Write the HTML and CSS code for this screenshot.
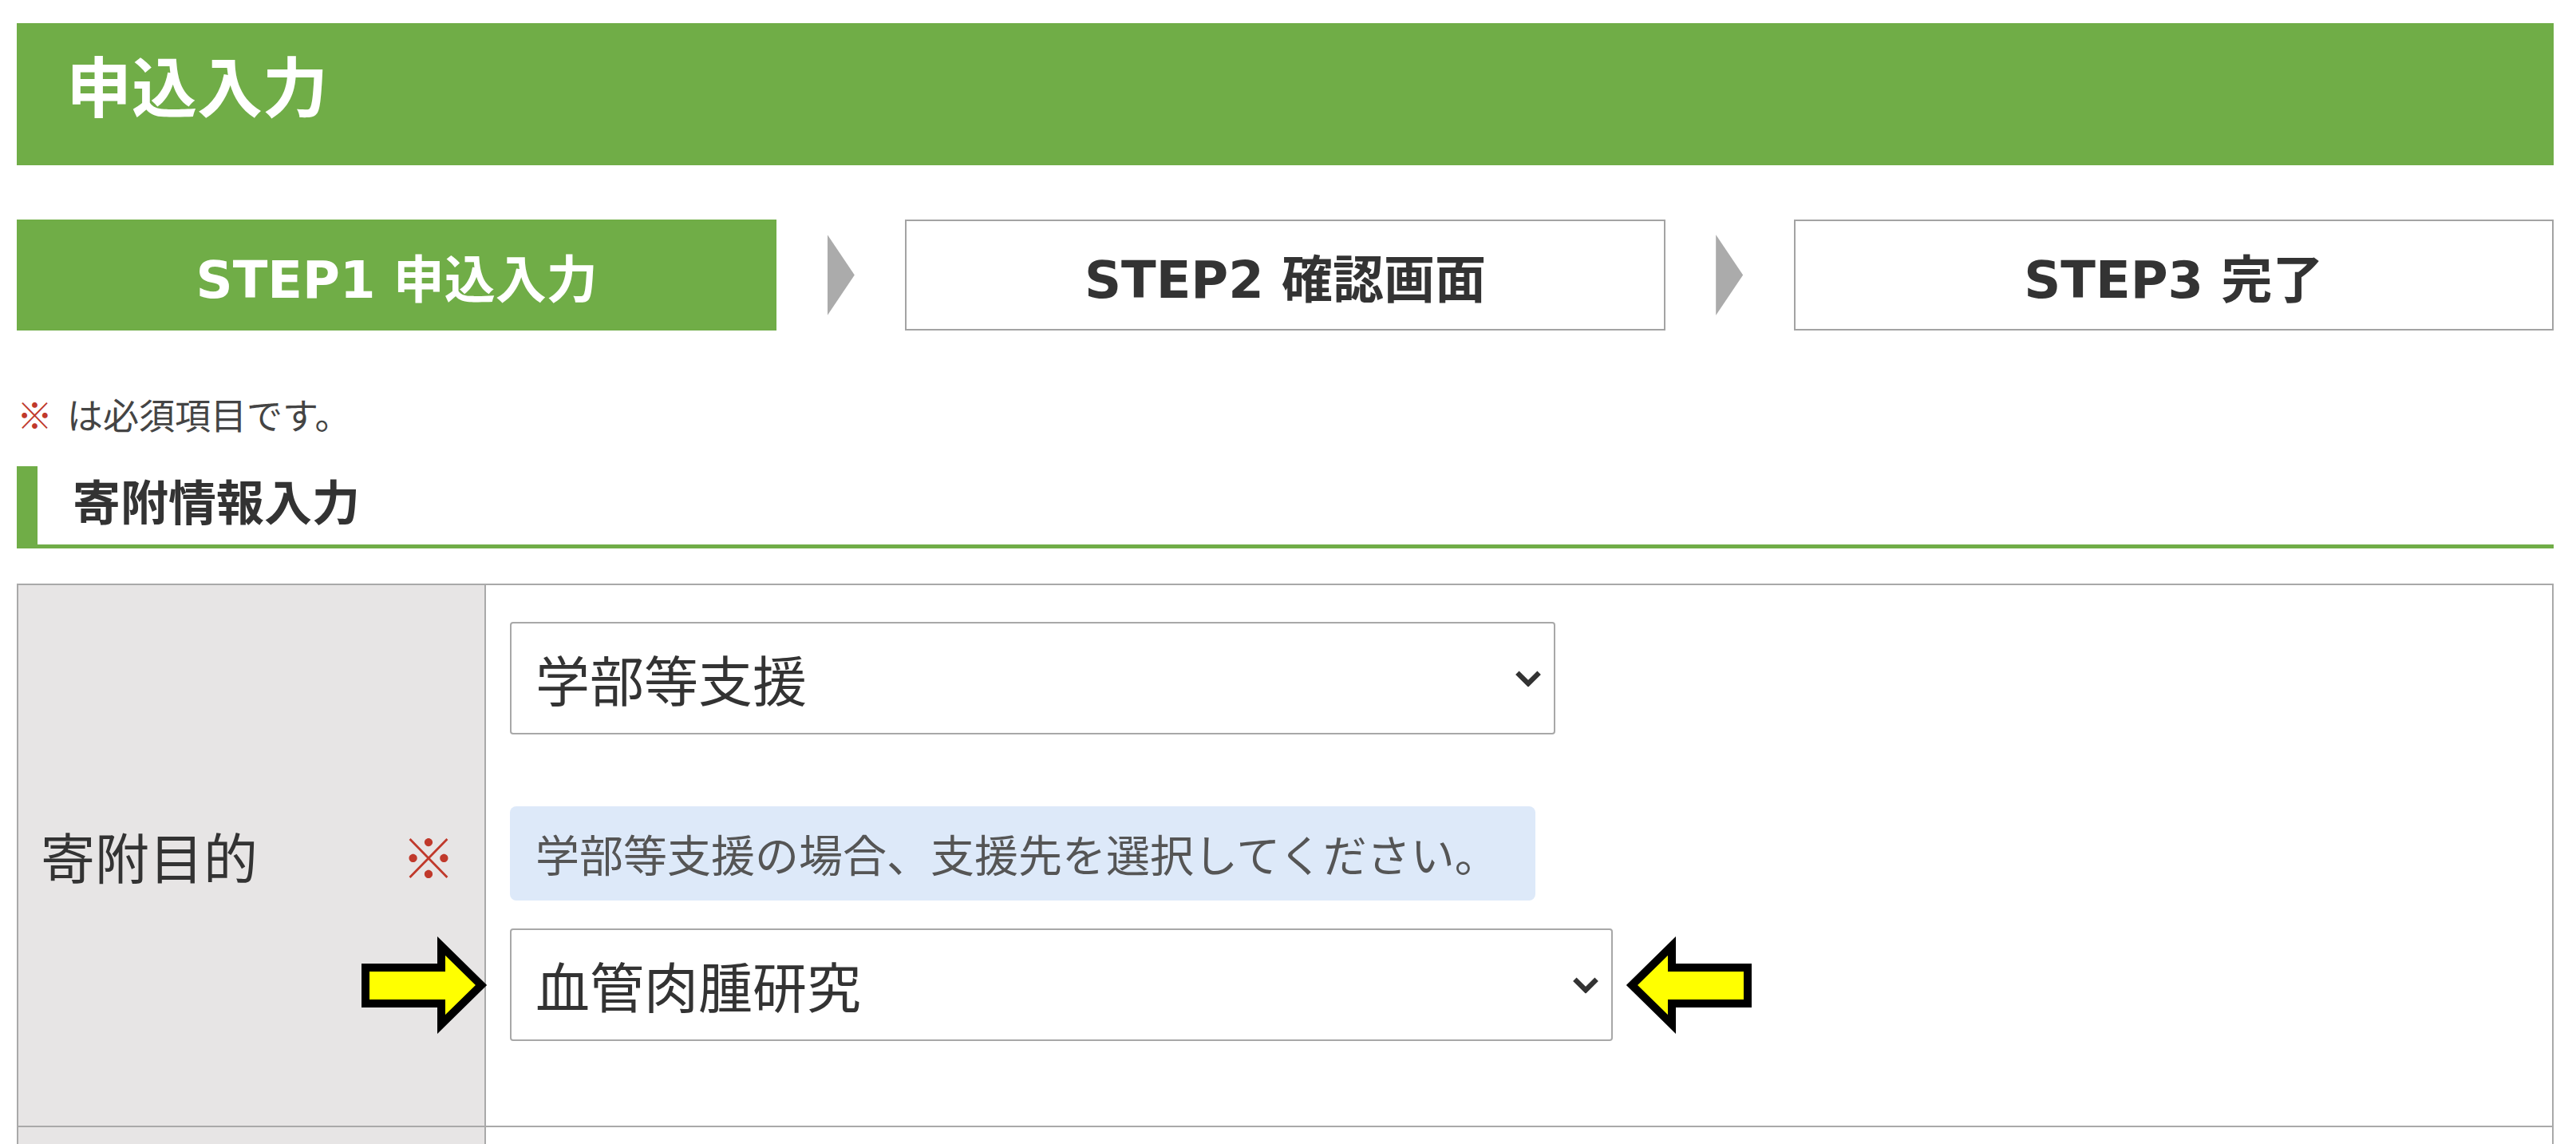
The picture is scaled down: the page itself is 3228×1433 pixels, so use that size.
FILE: index.html
```html
<!DOCTYPE html>
<html lang="ja">
<head>
<meta charset="utf-8">
<title>申込入力</title>
<link rel="stylesheet" href="styles.css">
</head>
<body>
<div class="page">
  <h1 class="page-title">申込入力</h1>

  <ol class="steps">
    <li class="step step-current">STEP1 申込入力</li>
    <li class="step-sep"><span class="tri"></span></li>
    <li class="step">STEP2 確認画面</li>
    <li class="step-sep"><span class="tri"></span></li>
    <li class="step">STEP3 完了</li>
  </ol>

  <p class="note"><span class="req">※</span> は必須項目です。</p>

  <h2 class="section-title">寄附情報入力</h2>

  <table class="form-table">
    <colgroup><col class="col-label"><col></colgroup>
    <tr>
      <th><div class="label"><span>寄附目的</span><span class="req">※</span></div></th>
      <td>
        <div class="select-wrap select-1">
          <select><option>学部等支援</option></select>
          <svg class="chev" viewBox="0 0 32 20"><path d="M3 3 L16 16 L29 3" fill="none" stroke="#333" stroke-width="6"/></svg>
        </div>
        <p class="hint">学部等支援の場合、支援先を選択してください。</p>
        <div class="select-wrap select-2">
          <select><option>血管肉腫研究</option></select>
          <svg class="chev" viewBox="0 0 32 20"><path d="M3 3 L16 16 L29 3" fill="none" stroke="#333" stroke-width="6"/></svg>
          <svg class="arrow arrow-in-left" viewBox="0 0 160 112"><path d="M5 34 H100 V7 L150 56 L100 105 V79 H5 Z" fill="#ffff00" stroke="#000" stroke-width="10" stroke-linejoin="miter"/></svg>
          <svg class="arrow arrow-in-right" viewBox="0 0 160 112"><path d="M5 34 H100 V7 L150 56 L100 105 V79 H5 Z" fill="#ffff00" stroke="#000" stroke-width="10" stroke-linejoin="miter"/></svg>
        </div>
      </td>
    </tr>
    <tr class="next-row">
      <th></th>
      <td></td>
    </tr>
  </table>
</div>
</body>
</html>
```

FILE: styles.css
```css
* { box-sizing: border-box; }

body {
  margin: 0;
  background: #fff;
  color: #333;
  font-family: "Noto Sans CJK JP", sans-serif;
}

.page {
  padding: 29px 28px 0 21px;
}

.page-title {
  margin: 0;
  height: 178px;
  padding-left: 62px;
  background: #70ad47;
  color: #fff;
  font-size: 82px;
  font-weight: 700;
  line-height: 152px;
}

.steps {
  list-style: none;
  margin: 68px 0 0;
  padding: 0;
  display: grid;
  grid-template-columns: 1fr 161px 1fr 161px 1fr;
  height: 139px;
}

.step {
  display: flex;
  align-items: center;
  justify-content: center;
  border: 2px solid #a3a3a3;
  background: #fff;
  color: #333;
  font-family: "DejaVu Sans", "Noto Sans CJK JP", sans-serif;
  font-size: 64px;
  font-weight: 700;
}

.step-current {
  background: #70ad47;
  border-color: #70ad47;
  color: #fff;
}

.step-sep {
  display: flex;
  align-items: center;
  justify-content: center;
}

.tri {
  width: 34px;
  height: 101px;
  background: #ababab;
  clip-path: polygon(0 0, 100% 50%, 0 100%);
}

.note {
  margin: 76px 0 0;
  font-size: 45px;
  line-height: 58px;
  color: #444;
}

.req {
  color: #c0392b;
}

.note .req {
  margin-right: 8px;
}

.section-title {
  margin: 36px 0 0;
  padding: 4px 0 18px 44px;
  border-left: 26px solid #70ad47;
  border-bottom: 5px solid #70ad47;
  font-size: 60px;
  font-weight: 700;
  line-height: 76px;
  color: #333;
}

.form-table {
  margin-top: 44px;
  width: 100%;
  border-collapse: collapse;
  table-layout: fixed;
  border: 2px solid #a9a9a9;
}

.col-label { width: 586px; }

.form-table th,
.form-table td {
  border: 2px solid #a9a9a9;
}

.form-table th {
  background: #e7e5e5;
  padding: 0 36px 0 28px;
  vertical-align: middle;
  text-align: left;
  font-weight: 400;
  font-size: 68px;
  color: #333;
}

.label {
  display: flex;
  justify-content: space-between;
  align-items: center;
}

.form-table td {
  padding: 46px 0 106px 30px;
  vertical-align: top;
  background: #fff;
}

.select-wrap {
  position: relative;
  height: 141px;
}

.select-1 { width: 1310px; }
.select-2 { width: 1382px; margin-top: 35px; }

.select-wrap select {
  -webkit-appearance: none;
  appearance: none;
  width: 100%;
  height: 100%;
  margin: 0;
  padding: 0 70px 0 30px;
  border: 2px solid #a8a8a8;
  border-radius: 4px;
  background: #fff;
  color: #333;
  font-family: "Noto Sans CJK JP", sans-serif;
  font-size: 68px;
}

.chev {
  position: absolute;
  right: 17px;
  top: 50%;
  width: 34px;
  height: 21px;
  transform: translateY(-50%);
}

.hint {
  margin: 90px 0 0;
  width: 1285px;
  height: 118px;
  padding-left: 32px;
  border-radius: 8px;
  background: #dde9f9;
  color: #555;
  font-size: 55px;
  line-height: 116px;
}

.arrow {
  position: absolute;
  top: 15px;
  width: 160px;
  height: 112px;
  overflow: visible;
}

.arrow-in-left {
  right: 100%;
  margin-right: 26px;
}

.arrow-in-right {
  left: 100%;
  margin-left: 14px;
  transform: scaleX(-1);
}

.next-row th,
.next-row td {
  height: 200px;
}
```
